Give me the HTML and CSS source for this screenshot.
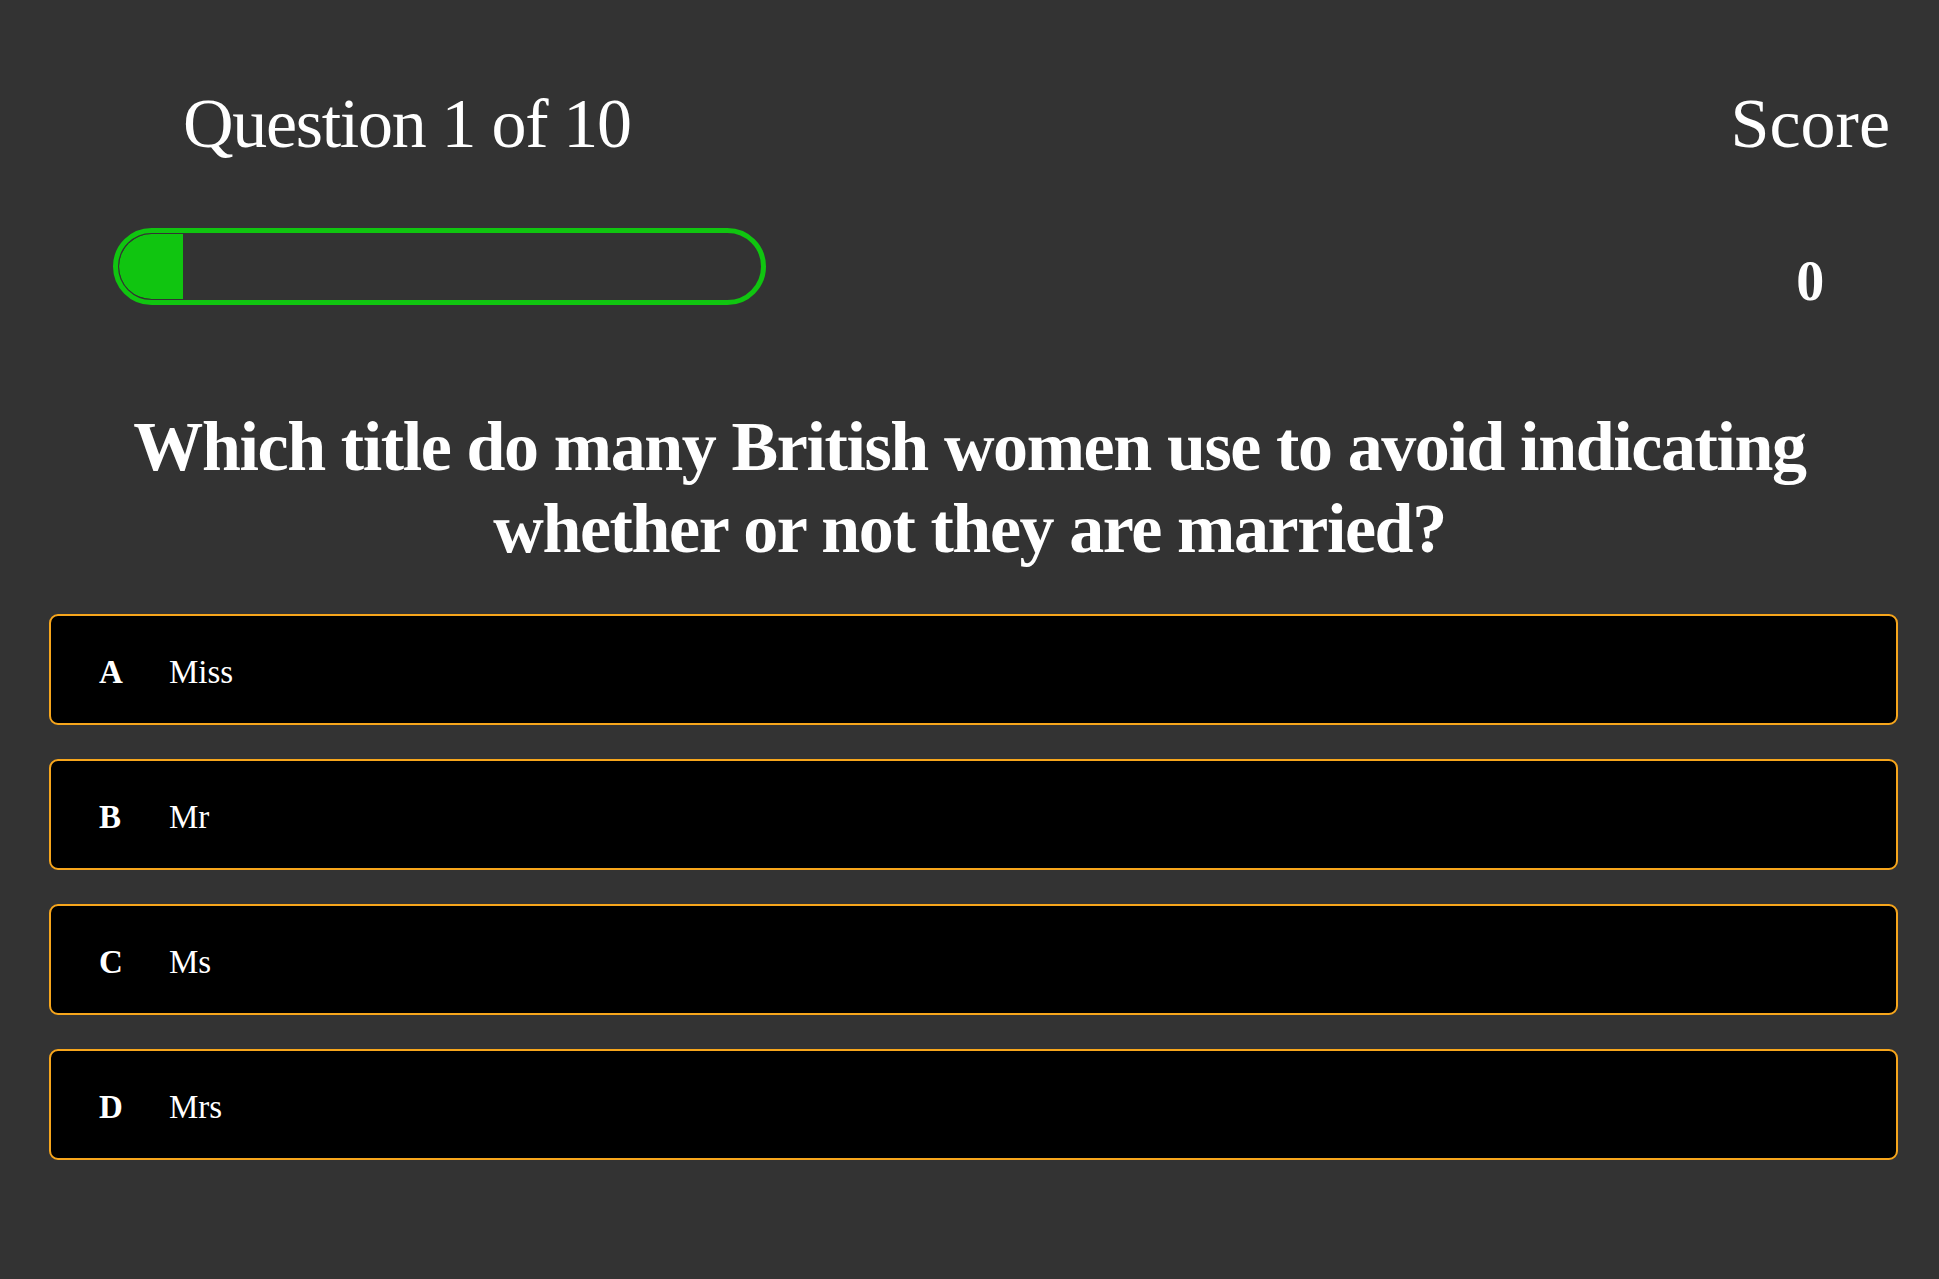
FILE: index.html
```html
<!DOCTYPE html>
<html lang="en">
<head>
<meta charset="utf-8">
<title>Quiz</title>
<link rel="stylesheet" href="styles.css">
</head>
<body>
<main class="quiz">
  <header class="hud">
    <div class="progress-col">
      <h2 class="hud-title question-count">Question 1 of 10</h2>
      <div class="progress-bar">
        <div class="progress-track">
          <div class="progress-fill" style="width: 10%"></div>
        </div>
      </div>
    </div>
    <div class="score-col">
      <h2 class="hud-title">Score</h2>
      <p class="score-value">0</p>
    </div>
  </header>
  <h1 class="question">Which title do many British women use to avoid indicating whether or not they are married?</h1>
  <ul class="choices">
    <li class="choice"><span class="choice-letter">A</span><span class="choice-text">Miss</span></li>
    <li class="choice"><span class="choice-letter">B</span><span class="choice-text">Mr</span></li>
    <li class="choice"><span class="choice-letter">C</span><span class="choice-text">Ms</span></li>
    <li class="choice"><span class="choice-letter">D</span><span class="choice-text">Mrs</span></li>
  </ul>
</main>
</body>
</html>
```

FILE: styles.css
```css
* { box-sizing: border-box; }

html, body {
  margin: 0;
  padding: 0;
  background: #333333;
  color: #ffffff;
  font-family: "Liberation Serif", "Times New Roman", serif;
}

.quiz {
  width: 1939px;
  min-height: 1279px;
}

.hud {
  display: flex;
  justify-content: space-between;
  align-items: flex-start;
  padding: 84px 49px 0 113px;
}

.hud-title {
  margin: 0;
  font-size: 70px;
  font-weight: 400;
  line-height: 80px;
}

.progress-col {
  width: 653px;
}

.question-count {
  padding-left: 70px;
  letter-spacing: -1.3px;
}

.progress-bar {
  margin-top: 64px;
  height: 77px;
  border: 5px solid #10c510;
  border-radius: 39px;
  padding: 1px;
}

.progress-track {
  height: 100%;
  border-radius: 33px;
  overflow: hidden;
}

.progress-fill {
  height: 100%;
  background: #10c510;
  border-radius: 33px 0 0 33px;
}

.score-col {
  text-align: center;
}

.score-value {
  margin: 87px 0 0;
  font-size: 56px;
  font-weight: 700;
  line-height: 60px;
}

.question {
  margin: 95px auto 0;
  width: 1760px;
  text-align: center;
  font-size: 70px;
  font-weight: 700;
  line-height: 82px;
  letter-spacing: -1.4px;
}

.choices {
  list-style: none;
  margin: 44px 0 0 49px;
  padding: 0;
  width: 1849px;
  display: flex;
  flex-direction: column;
  gap: 34px;
}

.choice {
  display: flex;
  align-items: center;
  height: 111px;
  padding: 6px 0 0 48px;
  background: #000000;
  border: 2px solid #f7a61c;
  border-radius: 9px;
  font-size: 33px;
}

.choice-letter {
  width: 70px;
  font-weight: 700;
}
```
